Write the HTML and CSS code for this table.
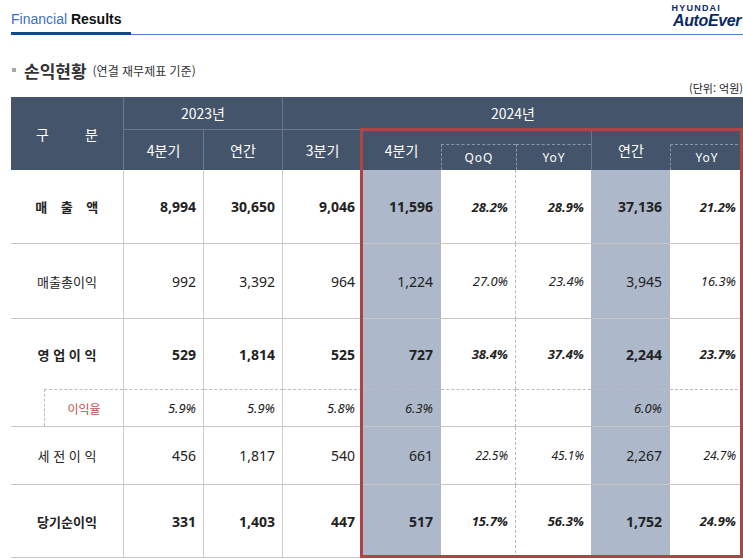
FILE: index.html
```html
<!DOCTYPE html>
<html lang="ko">
<head>
<meta charset="utf-8">
<title>Financial Results</title>
<link rel="stylesheet" href="styles.css">
</head>
<body>
<div class="page">
  <header class="topbar">
    <h1 class="doc-title"><span class="fin-word">Financial</span> Results</h1>
    <div class="logo">
      <span class="logo-hy">HYUNDAI</span>
      <span class="logo-ae">AutoEver</span>
    </div>
  </header>

  <h2 class="section-title"><span class="bullet"></span>손익현황<small>(연결 재무제표 기준)</small></h2>
  <div class="unit">(단위: 억원)</div>

  <div class="table-wrap">
    <table class="fin">
      <colgroup>
        <col style="width:113px">
        <col style="width:80px">
        <col style="width:79px">
        <col style="width:79px">
        <col style="width:79px">
        <col style="width:75px">
        <col style="width:75px">
        <col style="width:79px">
        <col style="width:73px">
      </colgroup>
      <thead>
        <tr class="h1">
          <th rowspan="2" class="gubun"><span>구</span><span>분</span></th>
          <th colspan="2" class="y2023">2023년</th>
          <th colspan="6" class="y2024">2024년</th>
        </tr>
        <tr class="h2">
          <th class="br">4분기</th>
          <th class="br">연간</th>
          <th>3분기</th>
          <th>4분기</th>
          <th class="qbox"><div>QoQ</div></th>
          <th class="qbox"><div>YoY</div></th>
          <th class="bl">연간</th>
          <th class="qbox"><div>YoY</div></th>
        </tr>
      </thead>
      <tbody>
        <tr class="r-sales strong">
          <td class="label wide">매출액</td>
          <td>8,994</td><td>30,650</td><td>9,046</td>
          <td class="hl">11,596</td><td class="pct">28.2%</td><td class="pct">28.9%</td>
          <td class="hl">37,136</td><td class="pct">21.2%</td>
        </tr>
        <tr class="r-gross">
          <td class="label">매출총이익</td>
          <td>992</td><td>3,392</td><td>964</td>
          <td class="hl">1,224</td><td class="pct">27.0%</td><td class="pct">23.4%</td>
          <td class="hl">3,945</td><td class="pct">16.3%</td>
        </tr>
        <tr class="r-op strong">
          <td class="label">영 업 이 익</td>
          <td>529</td><td>1,814</td><td>525</td>
          <td class="hl">727</td><td class="pct">38.4%</td><td class="pct">37.4%</td>
          <td class="hl">2,244</td><td class="pct">23.7%</td>
        </tr>
        <tr class="r-ratio">
          <td class="label"><div class="ratio-box">이익율</div></td>
          <td class="pct">5.9%</td><td class="pct">5.9%</td><td class="pct">5.8%</td>
          <td class="hl pct">6.3%</td><td></td><td></td>
          <td class="hl pct">6.0%</td><td></td>
        </tr>
        <tr class="r-pretax">
          <td class="label">세 전 이 익</td>
          <td>456</td><td>1,817</td><td>540</td>
          <td class="hl">661</td><td class="pct">22.5%</td><td class="pct">45.1%</td>
          <td class="hl">2,267</td><td class="pct">24.7%</td>
        </tr>
        <tr class="r-net strong">
          <td class="label">당기순이익</td>
          <td>331</td><td>1,403</td><td>447</td>
          <td class="hl">517</td><td class="pct">15.7%</td><td class="pct">56.3%</td>
          <td class="hl">1,752</td><td class="pct">24.9%</td>
        </tr>
      </tbody>
    </table>
    <div class="highlight-box"></div>
  </div>
</div>
</body>
</html>
```

FILE: styles.css
```css
html, body {
  margin: 0;
  padding: 0;
  background: #fff;
  overflow: hidden;
}
body {
  font-family: "Noto Sans", "Noto Sans CJK KR", sans-serif;
  color: #222;
}
.page {
  padding-left: 11px;
  width: 732px;
}

/* top bar */
.topbar {
  height: 34px;
  display: flex;
  justify-content: space-between;
  align-items: flex-end;
  border-bottom: 1px solid #4f7fbb;
}
.doc-title {
  margin: 0 0 -1px;
  width: 120px;
  font: bold 14px/16px "Liberation Sans", Arial, sans-serif;
  color: #111;
  padding-bottom: 5px;
  border-bottom: 3px solid #0e4a8e;
}
.fin-word {
  font-weight: normal;
  color: #3d6fc2;
}
.logo {
  align-self: flex-start;
  display: flex;
  flex-direction: column;
  align-items: flex-end;
  padding-top: 4px;
  margin-right: 2px;
  font-family: "Liberation Sans", Arial, sans-serif;
  color: #0d2a63;
}
.logo-hy {
  font-size: 9px;
  line-height: 9px;
  font-weight: bold;
  letter-spacing: 1.2px;
  margin-right: 20px;
}
.logo-ae {
  font-size: 16px;
  line-height: 16px;
  font-weight: bold;
  font-style: italic;
  letter-spacing: -0.4px;
}

/* section title */
.section-title {
  margin: 23px 0 0;
  height: 24px;
  display: flex;
  align-items: center;
  font-family: "Noto Sans CJK KR", sans-serif;
  font-size: 17px;
  font-weight: bold;
  color: #333;
}
.bullet {
  width: 4px;
  height: 4px;
  background: #a8a8a8;
  margin: 0 8px 0 1px;
}
.section-title small {
  font-size: 12px;
  font-weight: normal;
  margin-left: 6px;
  color: #333;
}
.unit {
  height: 12px;
  line-height: 12px;
  margin-bottom: 3px;
  text-align: right;
  font-family: "Noto Sans CJK KR", sans-serif;
  font-size: 11px;
  color: #222;
}

/* table */
.table-wrap {
  position: relative;
}
.fin {
  border-collapse: separate;
  border-spacing: 0;
  table-layout: fixed;
  width: 732px;
}
.fin th {
  background: #44546a;
  color: #fff;
  font-weight: normal;
  font-size: 14px;
  padding: 0;
  text-align: center;
  font-family: "Noto Sans CJK KR", sans-serif;
}
.fin tr.h1 { height: 33px; }
.fin tr.h2 { height: 40px; }
.fin th.gubun {
  border-right: 1px solid #6a7789;
}
.fin th.gubun span {
  display: inline-block;
  margin: 0 18px;
}
.fin th.y2023 {
  border-right: 1px solid #6a7789;
  border-bottom: 1px solid #6a7789;
}
.fin th.y2024 {
  border-bottom: 1px solid #6a7789;
}
.fin th.br { border-right: 1px solid #6a7789; }
.fin th.bl { border-left: 1px solid #6a7789; }
.fin th.qbox {
  vertical-align: top;
  padding-top: 14px;
}
.fin th.qbox div {
  height: 25px;
  border-top: 1px dashed #8a96a7;
  border-left: 1px dashed #8a96a7;
  display: flex;
  align-items: center;
  justify-content: center;
  font-family: "Noto Sans", sans-serif;
  font-size: 12px;
  letter-spacing: 1px;
}

.fin td {
  font-size: 14px;
  color: #222;
  text-align: right;
  padding: 0 7px 0 0;
  border-bottom: 1px solid #c6c6c6;
  border-right: 1px solid #cdcdcd;
  white-space: nowrap;
}
.fin td:nth-child(4),
.fin td:nth-child(7),
.fin td:nth-child(9) { border-right: 0; }
.fin td:nth-child(5),
.fin td:nth-child(6),
.fin td:nth-child(8) { border-right: 1px dashed #b9b9b9; }
.fin td.hl { background: #adb9ca; }
.fin td.pct { font-style: italic; font-size: 13px; }
.fin td.label {
  text-align: center;
  padding: 0;
  font-family: "Noto Sans CJK KR", sans-serif;
  font-size: 13px;
}
.fin tr.strong td { font-weight: bold; }
.fin td.wide {
  letter-spacing: 13.5px;
  padding-left: 13px;
}

.fin tr.r-sales { height: 74px; }
.fin tr.r-gross { height: 75px; }
.fin tr.r-op { height: 70px; }
.fin tr.r-op td { border-bottom: 0; }
.fin tr.r-ratio { height: 37px; }
.fin tr.r-ratio td { border-top: 1px dashed #bdbdbd; font-size: 13px; }
.fin tr.r-ratio td.label { border-top: 0; height: 37px; vertical-align: top; }
.ratio-box {
  margin-left: 33px;
  height: 36px;
  border-top: 1px dashed #bdbdbd;
  border-left: 1px dashed #bdbdbd;
  display: flex;
  align-items: center;
  justify-content: center;
  font-size: 12px;
  color: #c0504d;
}
.fin tr.r-pretax { height: 58px; }
.fin tr.r-pretax td.pct { font-size: 12px; }
.fin tr.r-net { height: 73px; }

.highlight-box {
  position: absolute;
  left: 349px;
  top: 31px;
  width: 383px;
  height: 430px;
  box-sizing: border-box;
  border: 3px solid #ae4444;
  pointer-events: none;
}
```
